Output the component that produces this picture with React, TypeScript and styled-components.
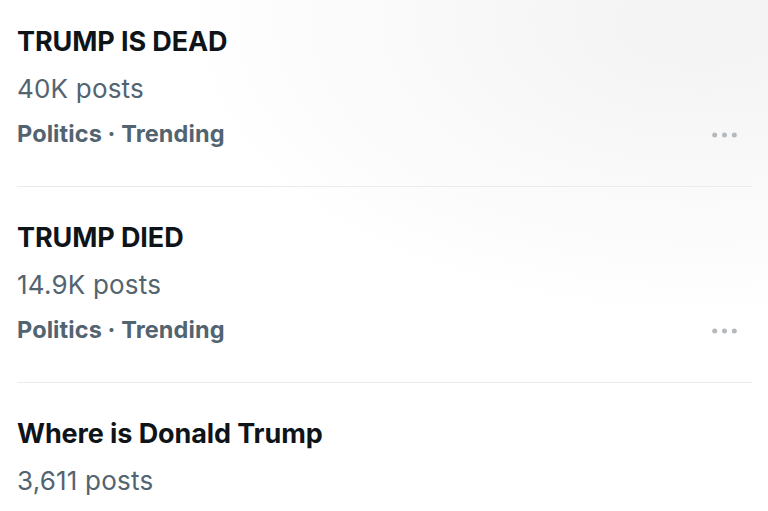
import React from "react";
import styled, { createGlobalStyle } from "styled-components";

const GlobalStyle = createGlobalStyle`
  html, body {
    margin: 0;
    padding: 0;
  }
  body {
    width: 768px;
    height: 511px;
    overflow: hidden;
    background: radial-gradient(ellipse 520px 300px at 700px 20px, #f3f3f3 0%, #f8f8f8 45%, #ffffff 100%);
    font-family: Inter, "Noto Sans", "Liberation Sans", sans-serif;
    -webkit-font-smoothing: antialiased;
  }
`;

const List = styled.div`
  display: flex;
  flex-direction: column;
  margin-top: -9px;
`;

const Item = styled.div<{ $divider: boolean }>`
  display: flex;
  flex-direction: column;
  margin: 0 16px 0 17px;
  padding: 27px 0 30px;
  border-bottom: 1px solid ${(p) => (p.$divider ? "#e9ebec" : "transparent")};
`;

const Title = styled.div`
  font-size: 27px;
  line-height: 48px;
  font-weight: 700;
  color: #0f1419;
  letter-spacing: -0.1px;
`;

const Posts = styled.div`
  font-size: 26px;
  line-height: 46px;
  font-weight: 400;
  color: #536471;
  letter-spacing: 0.2px;
`;

const MetaRow = styled.div`
  display: flex;
  align-items: center;
  justify-content: space-between;
  height: 44px;
`;

const Meta = styled.div`
  font-size: 23.5px;
  line-height: 44px;
  font-weight: 700;
  color: #536471;
  letter-spacing: 0.1px;
`;

const MoreButton = styled.div`
  display: flex;
  align-items: center;
  margin-right: 15px;
  margin-top: 2px;
`;

const MoreIcon = () => (
  <svg width="25" height="6" viewBox="0 0 25 6" aria-hidden="true">
    <circle cx="2.7" cy="3" r="2.5" fill="#b4b9bd" />
    <circle cx="12.5" cy="3" r="2.5" fill="#b4b9bd" />
    <circle cx="22.3" cy="3" r="2.5" fill="#b4b9bd" />
  </svg>
);

type Trend = {
  title: string;
  posts: string;
  meta?: string;
};

const trends: Trend[] = [
  { title: "TRUMP IS DEAD", posts: "40K posts", meta: "Politics · Trending" },
  { title: "TRUMP DIED", posts: "14.9K posts", meta: "Politics · Trending" },
  { title: "Where is Donald Trump", posts: "3,611 posts" },
];

export default function App() {
  return (
    <>
      <GlobalStyle />
      <List>
        {trends.map((t, i) => (
          <Item key={t.title} $divider={i < trends.length - 1}>
            <Title>{t.title}</Title>
            <Posts>{t.posts}</Posts>
            {t.meta && (
              <MetaRow>
                <Meta>{t.meta}</Meta>
                <MoreButton>
                  <MoreIcon />
                </MoreButton>
              </MetaRow>
            )}
          </Item>
        ))}
      </List>
    </>
  );
}
